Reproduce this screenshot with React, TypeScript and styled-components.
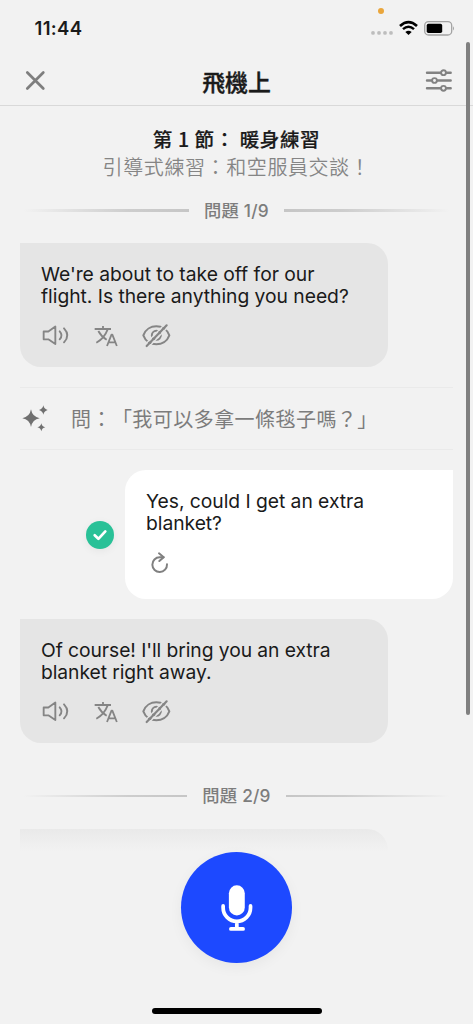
import React from "react";
import styled, { createGlobalStyle } from "styled-components";

const latin = `Inter, "Noto Sans CJK TC", sans-serif`;
const cjk = `"Noto Sans CJK TC", Inter, sans-serif`;

const GlobalStyle = createGlobalStyle`
  * { box-sizing: border-box; }
  body { margin: 0; background: #f2f2f2; overflow: hidden; }
`;

const Screen = styled.div`
  position: relative;
  display: flex;
  flex-direction: column;
  width: 473px;
  height: 1024px;
  overflow: hidden;
  background: #f2f2f2;
  color: #1a1a1a;
  font-family: ${latin};
  text-spacing-trim: space-all;
  svg { display: block; flex: none; overflow: visible; }
`;

const StatusBar = styled.div`
  display: flex;
  align-items: center;
  justify-content: space-between;
  flex: none;
  height: 56px;
  padding: 0 18px 0 34.5px;
`;

const Clock = styled.span`
  font-size: 18.5px;
  font-weight: 600;
  letter-spacing: 0.35px;
  line-height: 24px;
`;

const StatusIcons = styled.div`
  display: flex;
  align-items: center;
  gap: 6px;
`;

const RecordingDot = styled.span`
  position: absolute;
  left: 377.5px;
  top: 7.5px;
  width: 6px;
  height: 6px;
  border-radius: 50%;
  background: #eaa63c;
`;

const Header = styled.header`
  display: grid;
  grid-template-columns: 28px 1fr 28px;
  align-items: center;
  flex: none;
  height: 50px;
  padding: 0 21px 0 21px;
  border-bottom: 1px solid #d9d9d9;
`;

const Title = styled.h1`
  margin: 0;
  font: 500 22.9px/30px ${cjk};
  -webkit-text-stroke: 0.4px currentColor;
  text-align: center;
`;

const Content = styled.main`
  display: flex;
  flex-direction: column;
  flex: 1;
  min-height: 0;
  padding: 19px 20px 0;
  overflow: hidden;
`;

const SectionTitle = styled.h2`
  margin: 0;
  font: 500 19.5px/28px ${cjk};
  -webkit-text-stroke: 0.2px currentColor;
  letter-spacing: 0.6px;
  text-align: center;
  white-space: pre;
`;

const Subtitle = styled.p`
  margin: 0;
  font: 350 20px/28px ${cjk};
  letter-spacing: 0.6px;
  color: #858585;
  text-align: center;
  white-space: nowrap;
`;

const Divider = styled.div<{ $top: number; $bottom: number }>`
  display: flex;
  align-items: center;
  gap: 15px;
  flex: none;
  height: 24px;
  margin: ${(p) => p.$top}px 0 ${(p) => p.$bottom}px;
`;

const Rule = styled.span<{ $to: "left" | "right" }>`
  flex: 1;
  height: 2.5px;
  background: linear-gradient(to ${(p) => p.$to}, #c6c6c6, #cdcdcd 35%, #f2f2f2 98%);
`;

const Progress = styled.span`
  font-size: 17.3px;
  font-weight: 500;
  line-height: 24px;
  letter-spacing: 0.2px;
  color: #7d7d7d;
  white-space: nowrap;
`;

const Bubble = styled.section<{ $mine?: boolean }>`
  flex: none;
  width: ${(p) => (p.$mine ? 328 : 368)}px;
  height: ${(p) => (p.$mine ? 129 : 124)}px;
  padding: 21px 0 0 21px;
  border-radius: ${(p) => (p.$mine ? "21px 0 21px 21px" : "0 21px 21px 21px")};
  background: ${(p) => (p.$mine ? "#fff" : "#e5e5e5")};
`;

const Message = styled.p<{ $spacing: number }>`
  margin: 0;
  font-size: 19.3px;
  line-height: 21.7px;
  letter-spacing: ${(p) => p.$spacing}px;
  white-space: pre-line;
`;

const Tools = styled.div`
  display: flex;
  gap: 24px;
  padding: 16.6px 0 0 1px;
`;

const Prompt = styled.div`
  display: flex;
  align-items: center;
  gap: 23px;
  flex: none;
  height: 63px;
  margin: 20px 0;
  padding-left: 2px;
  border: solid #eaeaea;
  border-width: 1px 0;
`;

const PromptText = styled.p`
  margin: 0;
  font: 400 20px/28px ${cjk};
  font-kerning: none;
  letter-spacing: 0.45px;
  color: #7c7c7c;
  white-space: nowrap;
`;

const Reply = styled.div`
  display: flex;
  align-items: center;
  justify-content: flex-end;
  gap: 11px;
  flex: none;
  margin-bottom: 20px;
`;

const Check = styled.span`
  display: grid;
  place-items: center;
  width: 28px;
  height: 28px;
  border-radius: 50%;
  background: #29c197;
  box-shadow: 0 2px 8px rgba(0, 0, 0, 0.06);
`;

const Footer = styled.footer`
  position: absolute;
  inset: 826px 0 0;
  display: flex;
  flex-direction: column;
  align-items: center;
  justify-content: space-between;
  padding: 26px 0 10px;
  background: linear-gradient(rgba(242, 242, 242, 0.25), #f2f2f2 26px);
`;

const MicButton = styled.button`
  display: grid;
  place-items: center;
  width: 111px;
  height: 111px;
  padding: 0;
  border: 0;
  border-radius: 50%;
  background: #1d49ff;
  box-shadow: 0 4px 14px rgba(0, 0, 0, 0.05);
`;

const HomeIndicator = styled.span`
  width: 170px;
  height: 6px;
  border-radius: 3px;
  background: #000;
`;

const ScrollThumb = styled.span`
  position: absolute;
  left: 465.5px;
  top: 42px;
  width: 4px;
  height: 673px;
  border-radius: 2px;
  background: #808080;
`;

const line = {
  fill: "none",
  strokeLinecap: "round" as const,
  strokeLinejoin: "round" as const,
};

const CellDots = () => (
  <svg width="22" height="16" viewBox="0 0 22 16" fill="#bdbdbd">
    {[2, 8, 14, 20].map((x) => (
      <circle key={x} cx={x} cy="12.9" r="1.9" />
    ))}
  </svg>
);

const Wifi = () => (
  <svg width="19" height="14" viewBox="0 0 57 42" fill="none" stroke="#000">
    <path d="M3 15Q28.500 -8 54 15" strokeWidth="8" />
    <path d="M12 24.500Q28.500 10 45 24.500" strokeWidth="7.500" />
    <path d="M19 33Q28.500 25 38 33L28.500 42Z" fill="#000" stroke="none" />
  </svg>
);

const Battery = () => (
  <svg width="31" height="15" viewBox="0 0 31 15">
    <rect x="0.700" y="0.700" width="27" height="13.300" rx="3.800" fill="none" stroke="#a3a3a3" strokeWidth="1.300" />
    <rect x="2.700" y="2.800" width="15.500" height="9.200" rx="1.700" />
    <path d="M29 5.200Q31 7.400 29 9.600Z" fill="#a3a3a3" />
  </svg>
);

const Close = () => (
  <svg width="28" height="28" viewBox="0 0 28 28" stroke="#7e7e7e" strokeWidth="2.700" {...line}>
    <path d="M6.300 5.500L22.300 21.500M22.300 5.500L6.300 21.500" />
  </svg>
);

const Sliders = () => (
  <svg width="28" height="24" viewBox="0 0 28 24" stroke="#828282" strokeWidth="2.400" {...line}>
    <path d="M3 3.700H26.700M3 11.500H26.700M3 19.300H26.700" />
    <g fill="#f2f2f2" strokeWidth="1.900">
      <circle cx="19.500" cy="3.700" r="2.400" />
      <circle cx="10.500" cy="11.500" r="2.400" />
      <circle cx="19.500" cy="19.300" r="2.400" />
    </g>
  </svg>
);

const Speaker = () => (
  <svg width="28" height="24" viewBox="126 268 84 72" stroke="#858585" strokeWidth="5.600" {...line}>
    <path d="M131 290.500H145L166 275.500V328L145 314H131Z" />
    <path d="M179 290Q190 302 179 314M192 281Q212 302 192 323" />
  </svg>
);

const Translate = () => (
  <svg width="24" height="24" viewBox="282 268 72 72" stroke="#858585" strokeWidth="5.400" {...line} strokeLinecap="butt">
    <path d="M284 283H333M309 274V283M295 289Q304 306 320 315M323 284Q313 311 289 324" />
    <path d="M321 334L334.500 300H337L350.500 334M326 323H346" />
  </svg>
);

const EyeOff = () => (
  <svg width="29" height="24" viewBox="426 268 87 72" stroke="#858585" strokeWidth="6" {...line}>
    <path d="M430 302C443 266 495 266 508 302C495 338 443 338 430 302Z" />
    <circle cx="469" cy="302" r="13.500" />
    <path d="M435.500 329.500L495.500 267.500M444.500 338.500L504.500 276.500" stroke="#e5e5e5" strokeWidth="4" />
    <path d="M440 334L500 272" strokeWidth="6.500" />
  </svg>
);

const Sparkles = () => (
  <svg width="26" height="28" viewBox="67 76 78 84" fill="#707070">
    <path d="M94 89Q98 112 120 115.500Q98 119 94 142Q90 119 68 115.500Q90 112 94 89Z" />
    <path d="M131 77Q133 88 144 91Q133 94 131 105Q129 94 118 91Q129 88 131 77Z" />
    <path d="M125 131Q127 141 137 143Q127 145 125 155Q123 145 113 143Q123 141 125 131Z" />
  </svg>
);

const Retry = () => (
  <svg width="24" height="24" viewBox="231 275 72 72" stroke="#808080" strokeWidth="6" {...line}>
    <path d="M291 315A22 22 0 1 1 269 294H281" />
    <path d="M267 282L281 293.500L268 305" />
  </svg>
);

const CheckMark = () => (
  <svg width="14" height="12" viewBox="0 0 14 12" stroke="#fff" strokeWidth="2.700" {...line}>
    <path d="M1.700 6.200L5.400 9.800L12.300 2.400" />
  </svg>
);

const Mic = () => (
  <svg width="32" height="46" viewBox="185 347 94 136" fill="#fff">
    <rect x="208" y="348" width="47" height="89" rx="23.500" />
    <path d="M191 409V414A40.500 40.500 0 0 0 272 414V409M231.500 456V477M214 477H250" stroke="#fff" strokeWidth="11" {...line} />
  </svg>
);

function TutorMessage({ text, spacing = 0 }: { text: string; spacing?: number }) {
  return (
    <Bubble>
      <Message $spacing={spacing}>{text}</Message>
      <Tools>
        <Speaker />
        <Translate />
        <EyeOff />
      </Tools>
    </Bubble>
  );
}

function QuestionDivider({ index, top, bottom }: { index: number; top: number; bottom: number }) {
  return (
    <Divider $top={top} $bottom={bottom}>
      <Rule $to="left" />
      <Progress>問題 {index}/9</Progress>
      <Rule $to="right" />
    </Divider>
  );
}

export default function App() {
  return (
    <Screen>
      <GlobalStyle />
      <StatusBar>
        <Clock>11:44</Clock>
        <StatusIcons>
          <CellDots />
          <Wifi />
          <Battery />
        </StatusIcons>
        <RecordingDot />
      </StatusBar>
      <Header>
        <Close />
        <Title>飛機上</Title>
        <Sliders />
      </Header>
      <Content>
        <SectionTitle>第 1 節： 暖身練習</SectionTitle>
        <Subtitle>引導式練習：和空服員交談！</Subtitle>
        <QuestionDivider index={1} top={17.5} bottom={20.5} />
        <TutorMessage spacing={-0.03} text={"We're about to take off for our\nflight. Is there anything you need?"} />
        <Prompt>
          <Sparkles />
          <PromptText>問：「我可以多拿一條毯子嗎？」</PromptText>
        </Prompt>
        <Reply>
          <Check>
            <CheckMark />
          </Check>
          <Bubble $mine>
            <Message $spacing={-0.04}>{"Yes, could I get an extra\nblanket?"}</Message>
            <Tools>
              <Retry />
            </Tools>
          </Bubble>
        </Reply>
        <TutorMessage spacing={-0.07} text={"Of course! I'll bring you an extra\nblanket right away."} />
        <QuestionDivider index={2} top={41} bottom={21} />
        <Bubble />
      </Content>
      <Footer>
        <MicButton aria-label="Record">
          <Mic />
        </MicButton>
        <HomeIndicator />
      </Footer>
      <ScrollThumb />
    </Screen>
  );
}
